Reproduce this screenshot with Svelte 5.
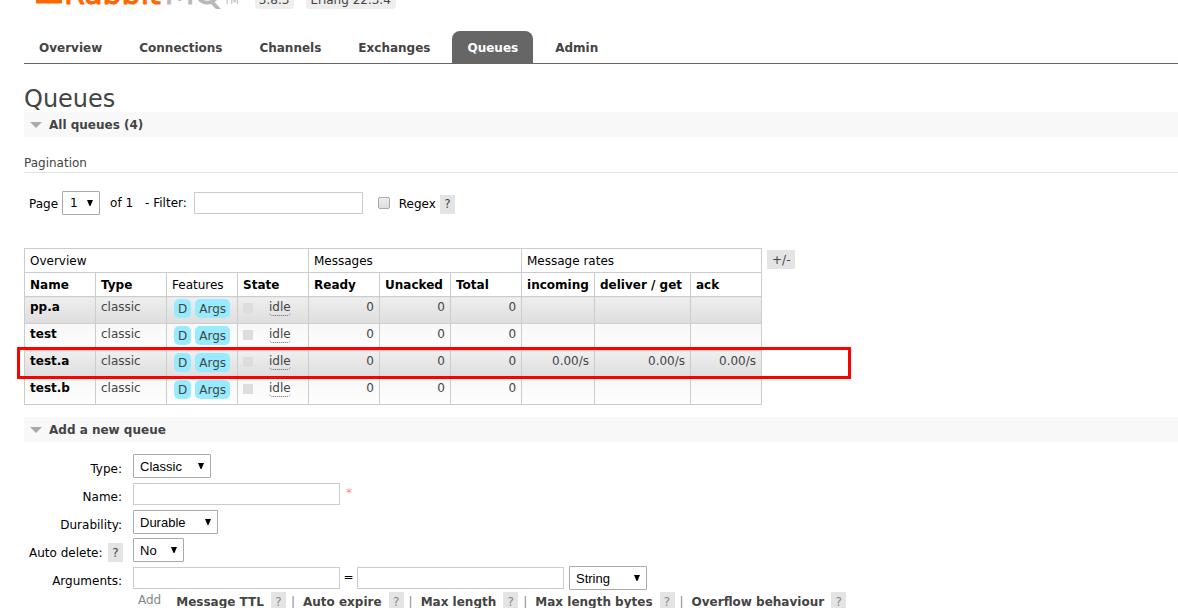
<script lang="ts">
	type Queue = { name: string; rates: string[] };

	const tabs = ['Overview', 'Connections', 'Channels', 'Exchanges', 'Queues', 'Admin'];
	const current = 'Queues';

	const columnWidths = [71, 71, 71, 71, 71, 71, 71, 73, 96, 71];
	const queues: Queue[] = [
		{ name: 'pp.a', rates: ['', '', ''] },
		{ name: 'test', rates: ['', '', ''] },
		{ name: 'test.a', rates: ['0.00/s', '0.00/s', '0.00/s'] },
		{ name: 'test.b', rates: ['', '', ''] }
	];

	const shortcuts = [
		'Message TTL',
		'Auto expire',
		'Max length',
		'Max length bytes',
		'Overflow behaviour'
	];

	let filter = $state('');
	let regex = $state(false);
	let queueName = $state('');
	let argKey = $state('');
	let argValue = $state('');
	let showList = $state(true);
	let showForm = $state(true);
</script>

{#snippet dropdown(id: string, options: string[], size: string)}
	<span class="select {size}">
		<select {id} aria-label={id}>
			{#each options as option}
				<option>{option}</option>
			{/each}
		</select>
		<svg viewBox="0 0 7 7" aria-hidden="true"><path d="M0 0h7L4 7H3z" /></svg>
	</span>
{/snippet}

<header>
	<a class="logo" href="#/" aria-label="RabbitMQ">
		<svg viewBox="0 0 28 28" aria-hidden="true">
			<path
				d="M2 0h6q1 0 1 1v9h6V1q0-1 1-1h6q1 0 1 1v9h3q2 0 2 2v15q0 1-1 1H1q-1 0-1-1V2q0-2 2-2z"
			/>
		</svg>
		<span class="rabbit">Rabbit</span><span class="mq">MQ</span><span class="tm">TM</span>
	</a>
	<span class="version">3.8.3</span>
	<span class="version">Erlang 22.3.4</span>
</header>

<nav>
	{#each tabs as tab}
		<a href="#/{tab.toLowerCase()}" class:selected={tab === current}>{tab}</a>
	{/each}
</nav>

<main>
	<h1>Queues</h1>

	<h2>
		<button type="button" aria-expanded={showList} onclick={() => (showList = !showList)}>
			<span class="arrow"></span>All queues (4)
		</button>
	</h2>
	{#if showList}
		<h3>Pagination</h3>
		<div class="pager">
			<label class="low" for="page">Page</label>
			{@render dropdown('page', ['1'], 'tiny')}
			<span class="of">of 1</span>
			<label class="filter-label" for="filter">- Filter:</label>
			<input id="filter" type="text" class="filter" bind:value={filter} />
			<input id="regex" type="checkbox" bind:checked={regex} />
			<label class="low" for="regex">Regex</label>
			<button type="button" class="help">?</button>
		</div>

		<div class="updatable">
			<table>
				<colgroup>
					{#each columnWidths as width}
						<col style="width: {width}px" />
					{/each}
				</colgroup>
				<thead>
					<tr>
						<th colspan="4">Overview</th>
						<th colspan="3">Messages</th>
						<th colspan="3">Message rates</th>
					</tr>
					<tr>
						<th class="sort">Name</th>
						<th class="sort">Type</th>
						<th>Features</th>
						<th class="sort">State</th>
						<th class="sort">Ready</th>
						<th class="sort">Unacked</th>
						<th class="sort">Total</th>
						<th class="sort">incoming</th>
						<th class="sort">deliver / get</th>
						<th class="sort">ack</th>
					</tr>
				</thead>
				<tbody>
					{#each queues as queue (queue.name)}
						<tr>
							<td><a href="#/queues/{queue.name}">{queue.name}</a></td>
							<td>classic</td>
							<td class="features"><span>D</span><span>Args</span></td>
							<td><div class="state"><i></i><abbr title="Idle">idle</abbr></div></td>
							<td class="num">0</td>
							<td class="num">0</td>
							<td class="num">0</td>
							{#each queue.rates as rate}
								<td class="num">{rate}</td>
							{/each}
						</tr>
					{/each}
				</tbody>
			</table>
			<button type="button" class="help columns">+/-</button>
			<div class="marker"></div>
		</div>
	{/if}

	<h2>
		<button type="button" aria-expanded={showForm} onclick={() => (showForm = !showForm)}>
			<span class="arrow"></span>Add a new queue
		</button>
	</h2>
	{#if showForm}
		<form onsubmit={(e) => e.preventDefault()}>
			<div class="field">
				<label for="type">Type:</label>
				{@render dropdown('type', ['Classic', 'Quorum'], 'medium')}
			</div>
			<div class="field">
				<label for="name">Name:</label>
				<input id="name" type="text" bind:value={queueName} />
				<span class="mand">*</span>
			</div>
			<div class="field">
				<label for="durability">Durability:</label>
				{@render dropdown('durability', ['Durable', 'Transient'], 'large')}
			</div>
			<div class="field">
				<div class="caption">
					<label for="autodelete">Auto delete:</label>
					<button type="button" class="help">?</button>
				</div>
				{@render dropdown('autodelete', ['No', 'Yes'], 'small')}
			</div>
			<div class="field">
				<label for="argument">Arguments:</label>
				<input id="argument" type="text" bind:value={argKey} />
				<span class="equals">=</span>
				<input type="text" aria-label="Argument value" bind:value={argValue} />
				{@render dropdown('argtype', ['String', 'Number', 'Boolean', 'List'], 'medium last')}
			</div>
			<div class="shortcuts">
				<span class="add">Add</span>
				{#each shortcuts as shortcut, i}
					{#if i > 0}<span class="bar">|</span>{/if}
					<button type="button" class="arg">{shortcut}</button>
					<button type="button" class="help">?</button>
				{/each}
			</div>
		</form>
	{/if}
</main>

<style>
	:global(body) {
		font: 12px/16px Verdana, 'DejaVu Sans', sans-serif;
		color: #444;
		background: #fff;
		overflow: hidden;
	}
	button,
	input,
	select {
		box-sizing: border-box;
		margin: 0;
		font: inherit;
		color: inherit;
	}
	button {
		border: 0;
		padding: 0;
		background: none;
		cursor: pointer;
	}
	a {
		color: inherit;
		text-decoration: none;
	}
	header {
		display: flex;
		align-items: flex-end;
		height: 9px;
		padding-left: 36px;
		margin-bottom: 22px;
		overflow: hidden;
	}
	.logo {
		display: flex;
		align-items: baseline;
		margin-right: 16px;
		padding-bottom: 4px;
		line-height: 22px;
	}
	.logo svg {
		width: 26px;
		height: 27px;
		margin-right: 2px;
		fill: #f60;
	}
	.rabbit {
		font-size: 30px;
		color: #f60;
		-webkit-text-stroke: 1px #f60;
	}
	.mq {
		margin-left: 4px;
		font-family: Lato, sans-serif;
		font-size: 32px;
		color: #b8b8b8;
		-webkit-text-stroke: 1px #b8b8b8;
	}
	.tm {
		margin-left: 4px;
		font-size: 10px;
		line-height: 7px;
		color: #b8b8b8;
	}
	.version {
		margin-right: 12px;
		padding: 0 5px 1px 4px;
		border-radius: 4px;
		background: #eee;
	}
	nav {
		display: flex;
		gap: 7px;
		margin-left: 24px;
		border-bottom: 1px solid #666;
	}
	nav a {
		padding: 9px 15px 7px;
		border-radius: 8px 8px 0 0;
		font-weight: bold;
	}
	nav a.selected {
		background: #666;
		color: #fff;
	}
	main {
		padding: 22px 0 0 24px;
	}
	h1 {
		margin: 0;
		font-size: 24px;
		line-height: 26px;
		font-weight: normal;
	}
	h2 {
		margin: 0;
		font-size: 12px;
		background: #f8f8f8;
	}
	h2 button {
		display: flex;
		align-items: center;
		gap: 7px;
		width: 100%;
		height: 25px;
		padding-left: 6px;
		text-align: left;
	}
	.arrow {
		border: solid transparent;
		border-width: 6px 6px 0;
		border-top-color: #aaa;
	}
	h3 {
		margin: 18px 0 18px;
		padding-bottom: 1px;
		border-bottom: 1px solid #e4e4e4;
		font-size: 12px;
		font-weight: normal;
	}
	.pager {
		display: flex;
		align-items: center;
		height: 24px;
		padding-left: 5px;
		margin-bottom: 33px;
		color: #000;
	}
	.pager > .select {
		margin: 0 10px 0 4px;
	}
	.filter-label {
		margin: 0 7px 0 12px;
	}
	.low {
		padding-top: 2px;
	}
	.select {
		position: relative;
		display: block;
	}
	.select select {
		display: block;
		width: 100%;
		height: 24px;
		padding: 0 6px;
		border: 1px solid #a9a9a9;
		border-radius: 1px;
		appearance: none;
		background: #fff;
		color: #000;
		font: 13px 'Liberation Sans', Arial, sans-serif;
	}
	.select svg {
		position: absolute;
		top: 9px;
		right: 7px;
		width: 6px;
		height: 6px;
		pointer-events: none;
	}
	.tiny {
		width: 38px;
	}
	.tiny select {
		padding-left: 7px;
		font: 12px Verdana, 'DejaVu Sans', sans-serif;
	}
	.small {
		width: 51px;
	}
	.medium {
		width: 78px;
	}
	.large {
		width: 85px;
	}
	input[type='text'] {
		width: 207px;
		height: 22px;
		border: 1px solid #ccc;
		padding: 3px;
		background: #fff;
	}
	input.filter {
		width: 169px;
	}
	input[type='checkbox'] {
		appearance: none;
		width: 12px;
		height: 12px;
		margin: 0 9px 0 15px;
		border: 1px solid #aaa;
		border-radius: 2px;
		background: linear-gradient(#eee, #ddd);
	}
	.help {
		min-width: 15px;
		height: 19px;
		padding: 0 4px;
		background: #e4e4e4;
		color: #444;
	}
	.pager .help {
		margin: 2px 0 0 4px;
	}
	.updatable {
		position: relative;
		display: flex;
		align-items: flex-start;
		margin-bottom: 12px;
	}
	table {
		table-layout: fixed;
		width: 738px;
		border-collapse: collapse;
	}
	th,
	td {
		padding: 0 5px;
		border: 1px solid #ccc;
	}
	th {
		height: 23px;
		text-align: left;
		font-weight: normal;
		color: #000;
		white-space: nowrap;
	}
	th.sort,
	td a {
		font-weight: bold;
		color: #000;
	}
	td {
		height: 23px;
		padding: 2px 5px 1px;
		vertical-align: top;
		background: linear-gradient(#f7f7f7, #fff);
	}
	tbody tr:nth-child(odd) td {
		background: linear-gradient(#efefef, #ddd);
	}
	.features {
		padding-left: 7px;
		padding-right: 0;
		white-space: nowrap;
	}
	.features span {
		display: inline-block;
		margin-right: 4px;
		padding: 2px 4px 1px;
		border-radius: 5px;
		background: #98ebff;
	}
	.state {
		display: flex;
		align-items: center;
		gap: 16px;
	}
	.state i {
		width: 10px;
		height: 10px;
		background: #ddd;
	}
	abbr {
		border-bottom: 1px dotted #666;
		border-radius: 4px;
		line-height: 16px;
		text-decoration: none;
	}
	.num {
		text-align: right;
	}
	.columns {
		margin: 2px 0 0 5px;
		padding: 0 5px;
	}
	.marker {
		position: absolute;
		left: -7px;
		top: 99px;
		width: 828px;
		height: 26px;
		border: 3px solid #f00;
		pointer-events: none;
	}
	form {
		display: grid;
		gap: 4px;
		padding-top: 12px;
	}
	.field {
		display: flex;
		align-items: center;
		height: 24px;
		color: #000;
	}
	.field > label,
	.caption {
		width: 98px;
		margin-right: 11px;
		padding-top: 5px;
		text-align: right;
		white-space: nowrap;
	}
	.field > .caption {
		display: flex;
		align-items: center;
		justify-content: space-between;
		width: 94px;
		margin-left: 5px;
		margin-right: 10px;
	}
	.mand {
		margin-left: 6px;
		padding-bottom: 3px;
		color: #f88;
	}
	.equals {
		width: 17px;
		padding-bottom: 2px;
		text-align: center;
	}
	.last {
		margin-left: 5px;
	}
	.shortcuts {
		display: flex;
		align-items: center;
		height: 19px;
		margin-top: -2px;
		padding-left: 114px;
		white-space: nowrap;
	}
	.add {
		margin-right: 15px;
		padding-bottom: 3px;
		color: #888;
	}
	.arg {
		font-weight: bold;
	}
	.shortcuts .help {
		margin-left: 7px;
		color: #888;
	}
	.bar {
		margin: 0 8px 0 5px;
		color: #888;
	}
</style>
